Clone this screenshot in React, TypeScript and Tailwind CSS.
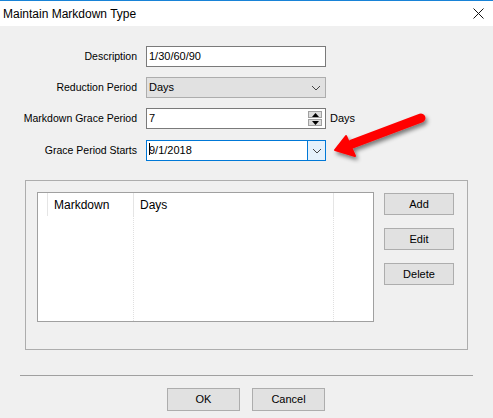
import React from "react";

const font = { fontFamily: '"Liberation Sans", Arial, sans-serif' };

function Chevron({ className = "" }: { className?: string }) {
  return (
    <svg width="10" height="6" viewBox="0 0 10 6" className={className}>
      <path d="M1 1 L5 5 L9 1" fill="none" stroke="#444" strokeWidth="1" />
    </svg>
  );
}

function Button({ label, className = "" }: { label: string; className?: string }) {
  return (
    <div
      className={`flex items-center justify-center bg-[#e1e1e1] border border-[#adadad] text-[11px] text-black ${className}`}
    >
      {label}
    </div>
  );
}

export default function App() {
  return (
    <div className="relative w-[493px] h-[418px] bg-[#f0f0f0] border-t border-[#1883d7] overflow-hidden" style={font}>
      {/* Title bar */}
      <div className="h-[25px] bg-white flex items-center justify-between pl-[3px] pr-[9px]">
        <span className="text-[12px] text-black">Maintain Markdown Type</span>
        <svg width="11" height="11" viewBox="0 0 11 11">
          <path d="M0.5 0.5 L10.5 10.5 M10.5 0.5 L0.5 10.5" stroke="#111" strokeWidth="1" />
        </svg>
      </div>

      {/* Form */}
      <div className="mt-[20px] grid grid-cols-[137px_180px_auto] gap-x-[9px] text-[11px] text-black">
        <div className="h-[21px] flex items-center justify-end text-[10.5px]">Description</div>
        <div className="h-[21px] bg-white border border-[#7a7a7a] flex items-center px-[2px]">1/30/60/90</div>
        <div />

        <div className="mt-[10px] h-[21px] flex items-center justify-end text-[10.5px]">Reduction Period</div>
        <div className="mt-[10px] h-[21px] bg-[#e1e1e1] border border-[#adadad] flex items-center justify-between px-[2px] pr-[4px]">
          <span>Days</span>
          <Chevron />
        </div>
        <div className="mt-[10px]" />

        <div className="mt-[10px] h-[21px] flex items-center justify-end text-[10.5px]">Markdown Grace Period</div>
        <div className="mt-[10px] h-[21px] bg-white border border-[#7a7a7a] flex items-center justify-between pl-[2px] pr-[3px]">
          <span>7</span>
          <div className="flex flex-col gap-[1px]">
            <div className="w-[14px] h-[7px] bg-[#dcdcdc] border border-[#a0a0a0] flex items-center justify-center">
              <svg width="7" height="4" viewBox="0 0 7 4"><path d="M0 4 L3.5 0 L7 4 Z" fill="#000" /></svg>
            </div>
            <div className="w-[14px] h-[7px] bg-[#dcdcdc] border border-[#a0a0a0] flex items-center justify-center">
              <svg width="7" height="4" viewBox="0 0 7 4"><path d="M0 0 L3.5 4 L7 0 Z" fill="#000" /></svg>
            </div>
          </div>
        </div>
        <div className="mt-[10px] h-[21px] flex items-center -ml-[5px]">Days</div>

        <div className="mt-[11px] h-[21px] flex items-center justify-end text-[10.5px]">Grace Period Starts</div>
        <div className="mt-[11px] h-[21px] bg-white border border-[#0078d7] flex items-stretch">
          <span className="flex-1 flex items-center px-[2px]">
            <span className="relative">
              <span className="absolute left-0 top-[1px] h-[12px] w-px bg-black" />
              9/1/2018
            </span>
          </span>
          <div className="w-[18px] bg-[#e5f1fb] border-l border-[#0078d7] flex items-center justify-center">
            <Chevron />
          </div>
        </div>
        <div className="mt-[11px]" />
      </div>

      {/* Group box */}
      <div className="ml-[25px] mt-[19px] w-[443px] h-[170px] border border-[#adadad] flex gap-[10px] pl-[11px] pt-[11px]">
        <div className="w-[337px] h-[130px] bg-white border border-[#a0a0a0] flex text-[12px] text-black">
          <div className="w-[10px] border-r border-[#e5e5e5] h-[23px]" />
          <div className="w-[86px] relative">
            <div className="h-[23px] flex items-center pl-[6px] border-r border-[#e5e5e5]">Markdown</div>
            <div className="absolute right-0 top-[23px] bottom-0 border-r border-dotted border-[#e0e0e0]" />
          </div>
          <div className="w-[200px] relative">
            <div className="h-[23px] flex items-center pl-[6px] border-r border-[#e5e5e5]">Days</div>
            <div className="absolute right-0 top-[23px] bottom-0 border-r border-dotted border-[#e0e0e0]" />
          </div>
          <div className="flex-1" />
        </div>
        <div className="flex flex-col gap-[13px] pt-[1px]">
          <Button label="Add" className="w-[70px] h-[22px]" />
          <Button label="Edit" className="w-[70px] h-[22px]" />
          <Button label="Delete" className="w-[70px] h-[22px]" />
        </div>
      </div>

      {/* Separator */}
      <div className="ml-[20px] mt-[25px] w-[453px] h-px bg-[#a0a0a0]" />

      {/* Footer buttons */}
      <div className="mt-[12px] flex gap-[12px] pl-[167px]">
        <Button label="OK" className="w-[73px] h-[23px]" />
        <Button label="Cancel" className="w-[73px] h-[23px]" />
      </div>

      {/* Red annotation arrow */}
      <svg className="absolute left-0 top-0 pointer-events-none" width="493" height="418" viewBox="0 0 493 418">
        <defs>
          <filter id="sh" x="-20%" y="-50%" width="140%" height="200%">
            <feGaussianBlur in="SourceAlpha" stdDeviation="2" />
            <feOffset dx="2" dy="3" result="b" />
            <feComponentTransfer><feFuncA type="linear" slope="0.5" /></feComponentTransfer>
            <feMerge><feMergeNode /><feMergeNode in="SourceGraphic" /></feMerge>
          </filter>
        </defs>
        <g filter="url(#sh)">
          <line x1="421" y1="117" x2="352" y2="143" stroke="#f00" strokeWidth="9" strokeLinecap="round" />
          <path d="M335 149 L346 135 L355 155 Z" fill="#f00" stroke="#f00" strokeWidth="2" strokeLinejoin="round" />
        </g>
      </svg>
    </div>
  );
}
